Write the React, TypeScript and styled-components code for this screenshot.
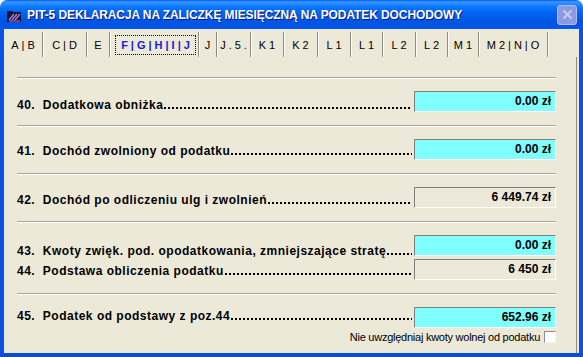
import React from 'react';
import styled, { createGlobalStyle } from 'styled-components';

const GlobalStyle = createGlobalStyle`
  html, body {
    margin: 0;
    padding: 0;
    background: #fff;
  }
  body {
    font-family: "Liberation Sans", Arial, sans-serif;
  }
`;

const Window = styled.div`
  width: 583px;
  height: 357px;
  display: flex;
  flex-direction: column;
`;

const TitleBar = styled.div`
  height: 29px;
  flex-shrink: 0;
  display: flex;
  align-items: center;
  padding: 0 6px 0 6px;
  border-radius: 7px 7px 0 0;
  background: linear-gradient(
    to bottom,
    #0058ee 0%,
    #3a93ff 6%,
    #288eff 12%,
    #127dff 20%,
    #036ffc 32%,
    #0262ee 48%,
    #0057e5 68%,
    #0054e3 84%,
    #0055eb 94%,
    #005bf5 100%
  );
`;

const TitleIcon = styled.svg`
  width: 16px;
  height: 16px;
  flex-shrink: 0;
  margin-right: 5px;
`;

const TitleText = styled.div`
  flex: 1;
  color: #fff;
  font-weight: bold;
  font-size: 12px;
  letter-spacing: -0.1px;
  text-shadow: 1px 1px 0 #0a1883;
  white-space: nowrap;
  padding-top: 1px;
`;

const CloseButton = styled.div`
  width: 20px;
  height: 20px;
  box-sizing: border-box;
  border: 1px solid #b3bcf0;
  border-radius: 3px;
  background: #8d99e0;
  display: flex;
  align-items: center;
  justify-content: center;
`;

const Body = styled.div`
  flex: 1;
  display: flex;
  flex-direction: column;
  background: #ece9d8;
  border-left: 4px solid #0b52e4;
  border-right: 4px solid #0b52e4;
  border-bottom: 4px solid #0a4bd8;
  min-height: 0;
`;

const TabBar = styled.div`
  display: flex;
  height: 25px;
  margin-top: 3px;
  flex-shrink: 0;
`;

const Tab = styled.div<{ $w: number; $active?: boolean }>`
  width: ${(p) => p.$w}px;
  box-sizing: border-box;
  display: flex;
  align-items: center;
  justify-content: center;
  border-right: 1px solid #8e8c80;
  box-shadow: 1px 0 0 #fff;
  font-size: 11px;
  letter-spacing: 3px;
  padding-left: 3px;
  color: ${(p) => (p.$active ? '#1a1ad6' : '#000')};
  font-weight: ${(p) => (p.$active ? 'bold' : 'normal')};
`;

const FocusRect = styled.span`
  display: flex;
  align-items: center;
  height: 20px;
  box-sizing: border-box;
  padding: 0 2px 0 5px;
  border: 1px dotted #000;
`;

const Panel = styled.div`
  flex: 1;
  display: flex;
  flex-direction: column;
  margin-right: 2px;
  padding: 20px 20px 0 13px;
  border-right: 1px solid #8f8d82;
`;

const Separator = styled.div`
  height: 1px;
  background: #aca899;
  border-bottom: 1px solid #fff;
  flex-shrink: 0;
`;

const Section = styled.div`
  display: flex;
  flex-direction: column;
  gap: 3px;
  padding: 12px 0 13px;
`;

const LastSection = styled(Section)`
  padding-bottom: 0;
`;

const Row = styled.div`
  display: flex;
  align-items: flex-start;
  height: 21px;
`;

const Label = styled.div<{ $top: number }>`
  flex: 1;
  min-width: 0;
  display: flex;
  align-items: flex-end;
  margin-top: ${(p) => p.$top}px;
  margin-right: 2px;
  height: 14px;
`;

const LabelText = styled.span`
  white-space: pre;
  font-size: 12px;
  line-height: 14px;
  font-weight: bold;
  letter-spacing: 0.5px;
  color: #000;
`;

const Leader = styled.span`
  flex: 1;
  height: 2px;
  margin: 0 0 3px 1px;
  background-image: linear-gradient(to right, #000 2px, transparent 2px);
  background-size: 4px 2px;
  background-repeat: repeat-x;
`;

const ValueBox = styled.div<{ $cyan?: boolean }>`
  width: 142px;
  height: 21px;
  flex-shrink: 0;
  box-sizing: border-box;
  border: 1px solid;
  border-color: #7f7f7f #fff #fff #7f7f7f;
  background: ${(p) => (p.$cyan ? '#80ffff' : 'transparent')};
  font-size: 12px;
  font-weight: bold;
  line-height: 19px;
  text-align: right;
  padding-right: 4px;
  color: #000;
`;

const CheckRow = styled.div`
  display: flex;
  justify-content: flex-end;
  align-items: center;
  gap: 4px;
  margin-top: 3px;
  font-size: 11px;
  letter-spacing: -0.25px;
  color: #000;
`;

const CheckBox = styled.span`
  width: 12px;
  height: 12px;
  box-sizing: border-box;
  border: 1px solid;
  border-color: #8a8a8a #f4f4f4 #f4f4f4 #8a8a8a;
  background: #fff;
`;

type Item = { n: string; label: string; value: string; cyan: boolean; top: number };

const sections: Item[][] = [
  [{ n: '40.', label: 'Dodatkowa obniżka', value: '0.00 zł', cyan: true, top: 7 }],
  [{ n: '41.', label: 'Dochód zwolniony od podatku', value: '0.00 zł', cyan: true, top: 5 }],
  [{ n: '42.', label: 'Dochód po odliczeniu ulg i zwolnień', value: '6 449.74 zł', cyan: false, top: 6 }],
  [
    { n: '43.', label: 'Kwoty zwięk. pod. opodatkowania, zmniejszające stratę', value: '0.00 zł', cyan: true, top: 9 },
    { n: '44.', label: 'Podstawa obliczenia podatku', value: '6 450 zł', cyan: false, top: 5 },
  ],
];

const last: Item = { n: '45.', label: 'Podatek od podstawy z poz.44', value: '652.96 zł', cyan: true, top: 2 };

const tabs = [
  { label: 'A|B', w: 39 },
  { label: 'C|D', w: 44 },
  { label: 'E', w: 23 },
  { label: 'F|G|H|I|J', w: 89, active: true },
  { label: 'J', w: 18 },
  { label: 'J.5.', w: 34 },
  { label: 'K1', w: 33 },
  { label: 'K2', w: 34 },
  { label: 'L1', w: 33 },
  { label: 'L1', w: 32 },
  { label: 'L2', w: 33 },
  { label: 'L2', w: 32 },
  { label: 'M1', w: 31 },
  { label: 'M2|N|O', w: 69 },
];

function FieldRow({ item }: { item: Item }) {
  return (
    <Row>
      <Label $top={item.top}>
        <LabelText>
          {item.n}  {item.label}
        </LabelText>
        <Leader />
      </Label>
      <ValueBox $cyan={item.cyan}>{item.value}</ValueBox>
    </Row>
  );
}

export default function App() {
  return (
    <>
      <GlobalStyle />
      <Window>
        <TitleBar>
          <TitleIcon viewBox="0 0 16 16">
            <path d="M1 4h5l1 1h8v10H1z" fill="#1c1530" />
            <path d="M3 13l5-6M6 13l5-6M9 13l5-6" stroke="#a87ee8" strokeWidth="1.3" />
            <path d="M3 14h11" stroke="#a87ee8" strokeWidth="1" />
          </TitleIcon>
          <TitleText>PIT-5 DEKLARACJA NA ZALICZKĘ MIESIĘCZNĄ NA PODATEK DOCHODOWY</TitleText>
          <CloseButton>
            <svg width="11" height="11" viewBox="0 0 11 11">
              <path d="M1.5 1.5l8 8M9.5 1.5l-8 8" stroke="#c6cdf3" strokeWidth="2" />
            </svg>
          </CloseButton>
        </TitleBar>
        <Body>
          <TabBar>
            {tabs.map((t, i) => (
              <Tab key={i} $w={t.w} $active={t.active}>
                {t.active ? <FocusRect>{t.label}</FocusRect> : t.label}
              </Tab>
            ))}
          </TabBar>
          <Panel>
            {sections.map((s, i) => (
              <React.Fragment key={i}>
                <Separator />
                <Section>
                  {s.map((item) => (
                    <FieldRow key={item.n} item={item} />
                  ))}
                </Section>
              </React.Fragment>
            ))}
            <Separator />
            <LastSection>
              <FieldRow item={last} />
            </LastSection>
            <CheckRow>
              Nie uwzględniaj kwoty wolnej od podatku
              <CheckBox />
            </CheckRow>
          </Panel>
        </Body>
      </Window>
    </>
  );
}
